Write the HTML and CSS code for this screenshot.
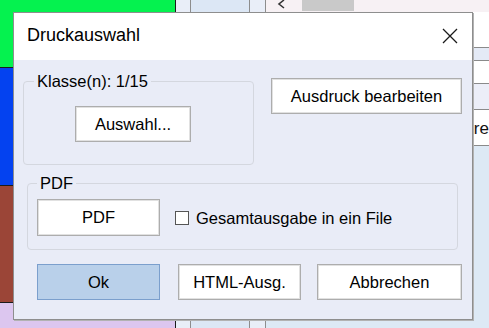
FILE: index.html
```html
<!DOCTYPE html>
<html lang="de">
<head>
  <meta charset="UTF-8" />
  <title>Druckauswahl</title>
  <link rel="stylesheet" href="styles.css">
</head>
<body>
  <div class="app">
    <div class="side">
      <div class="tile green"></div>
      <div class="tile blue"></div>
      <div class="tile brown"></div>
      <div class="tile purple"></div>
    </div>
    <div class="strip"></div>
    <div class="strip wide"></div>
    <div class="strip"></div>
    <div class="main">
      <div class="tabs">
        <svg class="arrow" width="10" height="10" viewBox="0 0 10 10">
          <path d="M8 0 L3 4 L8 8" stroke="#333" stroke-width="1.6" fill="none"/>
        </svg>
        <span class="tab"></span>
      </div>
      <div class="rows">
        <div class="row head"></div>
        <div class="row band"></div>
        <div class="row white"></div>
        <div class="row band tall"></div>
        <div class="row text">re</div>
        <div class="row last"></div>
      </div>
    </div>
  </div>

  <div class="dialog">
    <div class="titlebar">
      <span class="title">Druckauswahl</span>
      <svg class="close" width="16" height="16" viewBox="0 0 16 16">
        <path d="M1 1 L15 15 M15 1 L1 15" stroke="#1a1a1a" stroke-width="1.3" fill="none"/>
      </svg>
    </div>
    <div class="body">
      <div class="row1">
        <fieldset class="group classes">
          <legend>Klasse(n): 1/15</legend>
          <button class="btn choose">Auswahl...</button>
        </fieldset>
        <button class="btn edit">Ausdruck bearbeiten</button>
      </div>
      <fieldset class="group pdf">
        <legend>PDF</legend>
        <div class="pdf-row">
          <button class="btn pdf-btn">PDF</button>
          <label class="check"><span class="box"></span>Gesamtausgabe in ein File</label>
        </div>
      </fieldset>
      <div class="actions">
        <button class="btn ok">Ok</button>
        <button class="btn html">HTML-Ausg.</button>
        <button class="btn cancel">Abbrechen</button>
      </div>
    </div>
  </div>
</body>
</html>
```

FILE: styles.css
```css
* {
  box-sizing: border-box;
}

html, body {
  margin: 0;
  padding: 0;
  width: 489px;
  height: 328px;
  overflow: hidden;
  font-family: 'Liberation Sans', Arial, sans-serif;
  background: #dde9f5;
}

/* background application */
.app {
  display: flex;
  height: 328px;
}

.side {
  width: 193px;
  display: flex;
  flex-direction: column;
  border-right: 1px solid #1b1b1b;
}

.tile {
  border-bottom: 1px solid #1b1b1b;
}

.green { height: 68px; background: #05f24f; }
.blue { height: 118px; background: #0442f0; }
.brown { height: 117px; background: #9b4537; }
.purple { flex: 1; background: #dcc6ef; border-bottom: none; }

.strip {
  width: 17px;
  background: #e9eef8;
  border-right: 1px solid #8d8d8d;
}

.strip.wide {
  width: 65px;
  background: #dce7f5;
}

.main {
  flex: 1;
  display: flex;
  flex-direction: column;
  background: #f7f1f4;
}

.tabs {
  height: 12px;
  display: flex;
  align-items: flex-start;
}

.arrow {
  display: block;
  margin: 0 16px 0 10px;
}

.tab {
  width: 52px;
  height: 11px;
  background: #c9c9c9;
}

.rows {
  flex: 1;
  display: flex;
  flex-direction: column;
}

.row {
  background: #ffffff;
  border-bottom: 1px solid #8a8a8a;
}

.row.head { height: 36px; }
.row.band { height: 13px; background: #e4eaf6; }
.row.white { height: 23px; }
.row.band.tall { height: 26px; background: #eceef8; }

.row.text {
  height: 36px;
  font-size: 17px;
  padding: 9px 0 0 208px;
  color: #111;
}

.row.last {
  flex: 1;
  border-bottom: none;
  background: #dde9f5;
}

/* dialog window */
.dialog {
  position: absolute;
  left: 13px;
  top: 12px;
  width: 460px;
  height: 308px;
  background: #e9ecf7;
  border: 1px solid #8e8e8e;
  box-shadow: 1px 1px 0 #b2b2b2;
  display: flex;
  flex-direction: column;
}

.titlebar {
  height: 47px;
  background: #ffffff;
  display: flex;
  align-items: center;
  justify-content: space-between;
  padding: 0 14px 2px 13px;
}

.title {
  font-size: 18px;
  color: #000;
}

.close {
  display: block;
  margin-top: 1px;
}

.body {
  flex: 1;
  padding: 12px 0 0 9px;
  font-size: 16.5px;
}

.row1 {
  display: flex;
  align-items: flex-start;
}

.group {
  margin: 0;
  border: 1px solid #d4d7df;
  border-radius: 4px;
  min-width: 0;
  padding-left: 0;
  padding-right: 0;
}

.group legend {
  padding: 0 3px;
  margin-left: 10px;
  line-height: 18px;
  color: #000;
}

.classes {
  width: 231px;
  height: 93px;
  padding-top: 16px;
}

.classes .choose {
  margin-left: 51px;
}

.pdf {
  width: 431px;
  height: 76px;
  margin: 9px 0 0 4px;
  padding-top: 7px;
}

.pdf legend {
  margin-left: 9px;
}

.btn {
  font-family: inherit;
  font-size: 16.5px;
  height: 36px;
  background: #ffffff;
  border: 1px solid #adadad;
  box-shadow: inset 0 0 0 1px #e1e1e1;
  color: #000;
  padding: 0;
  margin: 0;
  border-radius: 0;
  display: block;
}

.choose { width: 116px; }

.edit {
  width: 191px;
  margin: 6px 0 0 17px;
}

.pdf-row {
  display: flex;
  align-items: center;
  padding-left: 9px;
}

.pdf-btn {
  width: 123px;
  height: 37px;
}

.check {
  display: flex;
  align-items: center;
  margin-left: 15px;
  margin-top: 1px;
  color: #000;
}

.box {
  width: 14px;
  height: 14px;
  background: #ffffff;
  border: 1px solid #555555;
  margin-right: 7px;
}

.actions {
  display: flex;
  margin: 14px 0 0 14px;
}

.ok {
  width: 123px;
  background: #b9d0ea;
  border-color: #7b9fcd;
  box-shadow: none;
}

.html {
  width: 123px;
  margin-left: 18px;
}

.cancel {
  width: 145px;
  margin-left: 16px;
}
```
